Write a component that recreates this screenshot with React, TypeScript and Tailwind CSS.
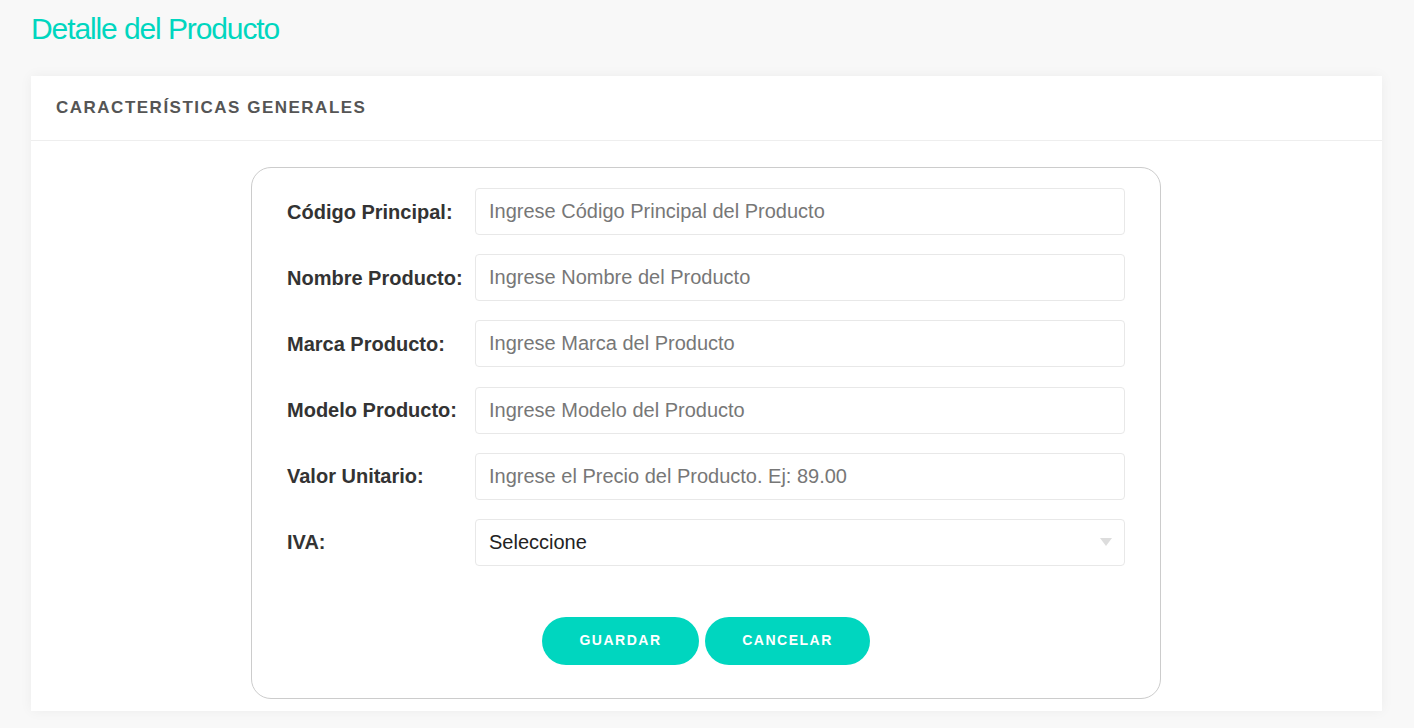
const fields = [
  { label: "Código Principal:", placeholder: "Ingrese Código Principal del Producto" },
  { label: "Nombre Producto:", placeholder: "Ingrese Nombre del Producto" },
  { label: "Marca Producto:", placeholder: "Ingrese Marca del Producto" },
  { label: "Modelo Producto:", placeholder: "Ingrese Modelo del Producto" },
  { label: "Valor Unitario:", placeholder: "Ingrese el Precio del Producto. Ej: 89.00" },
];

function Row({ label, children }: { label: string; children: React.ReactNode }) {
  return (
    <div className="flex items-center">
      <label className="w-[188px] shrink-0 text-[20px] font-bold text-[#333]">{label}</label>
      <div className="flex-1">{children}</div>
    </div>
  );
}

export default function App() {
  return (
    <div
      className="min-h-[728px] bg-[#f8f8f8] pl-[31px] pr-[32px] pt-3"
      style={{ fontFamily: '"Liberation Sans", Arial, sans-serif' }}
    >
      {/* Page title */}
      <h1 className="text-[30px] leading-[34px] tracking-[-1.1px] text-[#00d6bf]">Detalle del Producto</h1>

      {/* Card */}
      <div className="mt-[30px] bg-white shadow-[0_0_12px_rgba(0,0,0,0.05)]">
        <div className="flex h-[65px] items-center border-b border-[#eeeeee] px-[25px]">
          <h2 className="text-[17px] font-bold tracking-[1.5px] text-[#555]">CARACTERÍSTICAS GENERALES</h2>
        </div>

        <div className="pl-[15px] pr-4 pt-[26px] pb-[12px]">
          <form className="mx-auto w-[910px] rounded-[20px] border border-[#cccccc] px-[35px] pt-[20px] pb-[33px]">
            <div className="flex flex-col gap-[19.2px]">
              {fields.map((f) => (
                <Row key={f.label} label={f.label}>
                  <input
                    placeholder={f.placeholder}
                    className="h-[47px] w-full rounded-[4px] border border-[#e8e8e8] bg-white px-[13px] text-[20px] text-[#333] outline-none placeholder:text-[#777]"
                  />
                </Row>
              ))}
              <Row label="IVA:">
                <div className="relative">
                  <select className="h-[47px] w-full appearance-none rounded-[4px] border border-[#e8e8e8] bg-white px-[13px] text-[20px] text-[#222] outline-none">
                    <option>Seleccione</option>
                    <option>0%</option>
                    <option>12%</option>
                  </select>
                  <svg
                    className="pointer-events-none absolute right-[13px] top-1/2 -translate-y-1/2"
                    width="12"
                    height="8"
                    viewBox="0 0 12 8"
                  >
                    <path d="M0 0 H12 L6 8 Z" fill="#dddddd" />
                  </svg>
                </div>
              </Row>
            </div>

            <div className="mt-[51px] flex justify-center gap-[6px]">
              <button
                type="button"
                className="h-[48px] w-[157px] rounded-full bg-[#00d6bf] text-[14px] font-bold tracking-[1.5px] text-white"
              >
                GUARDAR
              </button>
              <button
                type="button"
                className="h-[48px] w-[165px] rounded-full bg-[#00d6bf] text-[14px] font-bold tracking-[1.5px] text-white"
              >
                CANCELAR
              </button>
            </div>
          </form>
        </div>
      </div>
    </div>
  );
}
